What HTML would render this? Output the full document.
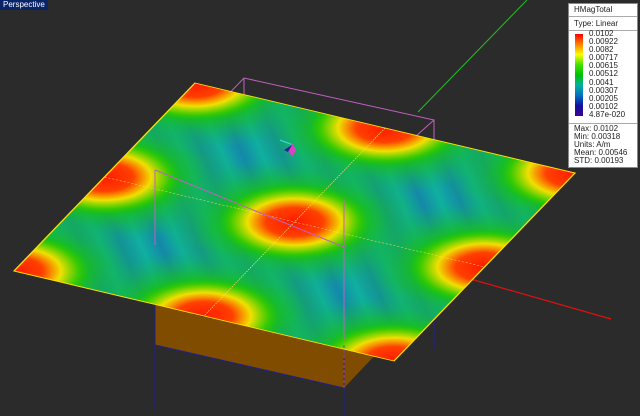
<!DOCTYPE html>
<html><head><style>
html,body{margin:0;width:640px;height:416px;overflow:hidden}
body{background:#2b2b2b;font-family:"Liberation Sans",sans-serif;position:relative}
.lab{position:absolute;left:0;top:0;background:#0a246a;color:#fff;font-size:8px;padding:0 3px;height:10px;line-height:10px}
.leg{position:absolute;left:568px;top:3px;width:70px;height:165px;background:#fff;border:1px solid #888;font-size:8px;color:#222;box-sizing:border-box}
.leg div{position:absolute;left:0}
</style></head><body>
<svg width="640" height="416" style="position:absolute;left:0;top:0;display:block">
<defs>
<linearGradient id="st" gradientUnits="userSpaceOnUse" x1="0" y1="0" x2="17" y2="-7" spreadMethod="reflect">
<stop offset="0" stop-color="#10b0a0"/><stop offset="1" stop-color="#1488a8"/></linearGradient>
<radialGradient id="gh"><stop offset="0" stop-color="#18c018"/><stop offset="0.5" stop-color="#18c018"/><stop offset="1" stop-color="#10b060" stop-opacity="0"/></radialGradient>
<radialGradient id="sp"><stop offset="0" stop-color="#ff1a00"/><stop offset="0.38" stop-color="#ff4000"/><stop offset="0.62" stop-color="#f0e000"/><stop offset="0.85" stop-color="#40cc00" stop-opacity="0.9"/><stop offset="1" stop-color="#18c018" stop-opacity="0"/></radialGradient>
<clipPath id="cp"><rect x="0" y="0" width="1" height="1"/></clipPath>
</defs>
<line x1="418" y1="112" x2="527" y2="0" stroke="#20c020" stroke-width="1"/>
<line x1="460" y1="276" x2="611" y2="319" stroke="#e01010" stroke-width="1.2"/>
<g stroke="#c060c0" stroke-width="1" fill="none">
<polyline points="155,170 244,78 434,120 344,200"/><line x1="244" y1="78" x2="244" y2="173"/><line x1="434" y1="120" x2="434" y2="195"/>
</g>
<polygon points="155,303 155,345 344,388 378,352 200,316" fill="#7f4c00"/>
<g stroke="#202090" stroke-width="1"><line x1="155" y1="300" x2="155" y2="410"/><line x1="344" y1="355" x2="344" y2="415"/><line x1="434" y1="320" x2="434" y2="350"/><line x1="155" y1="345" x2="344" y2="388"/></g>
<polygon points="195,83 575,173 394,361 14,271" fill="url(#st)"/>
<g transform="matrix(380,90,-181,188,195,83)">
<g clip-path="url(#cp)">
<g fill="url(#gh)">
<circle cx="0" cy="0" r="0.32"/><circle cx="0.5" cy="0" r="0.32"/><circle cx="1" cy="0" r="0.32"/>
<circle cx="0" cy="0.5" r="0.32"/><circle cx="0.5" cy="0.5" r="0.32"/><circle cx="1" cy="0.5" r="0.32"/>
<circle cx="0" cy="1" r="0.32"/><circle cx="0.5" cy="1" r="0.32"/><circle cx="1" cy="1" r="0.32"/>
</g>
<g fill="url(#sp)">
<circle cx="0" cy="0" r="0.18"/><circle cx="0.5" cy="0" r="0.18"/><circle cx="1" cy="0" r="0.18"/>
<circle cx="0" cy="0.5" r="0.18"/><circle cx="0.5" cy="0.5" r="0.18"/><circle cx="1" cy="0.5" r="0.18"/>
<circle cx="0" cy="1" r="0.18"/><circle cx="0.5" cy="1" r="0.18"/><circle cx="1" cy="1" r="0.18"/>
</g></g>
<rect x="0" y="0" width="1" height="1" fill="none" stroke="#ffe000" stroke-width="0.004"/>
<line x1="0.5" y1="0" x2="0.5" y2="1" stroke="#ffe060" stroke-width="0.002" stroke-dasharray="0.006 0.004"/>
<line x1="0" y1="0.5" x2="1" y2="0.5" stroke="#ffe060" stroke-width="0.002" stroke-dasharray="0.006 0.004"/>
</g>
<g stroke="#c060c0" stroke-width="1" fill="none"><line x1="155" y1="170" x2="155" y2="245"/><line x1="155" y1="170" x2="344" y2="247"/><line x1="344" y1="247" x2="344" y2="340"/><line x1="344" y1="200" x2="344" y2="247"/></g>
<line x1="344" y1="345" x2="344" y2="388" stroke="#8040c0" stroke-dasharray="3 2"/>
<line x1="280" y1="140" x2="293" y2="145" stroke="#40e0e0"/><polygon points="292,143 296,150 292,157 288,150" fill="#e040c0"/><polygon points="292,145 288,152 284,150" fill="#2020a0"/>
</svg>
<div class="lab">Perspective</div>
<div class="leg">
<div style="top:0;height:12px;border-bottom:1px solid #aaa;padding-left:5px;width:63px;line-height:12px">HMagTotal</div>
<div style="top:14px;height:12px;border-bottom:1px solid #aaa;padding-left:5px;width:63px;line-height:12px">Type: Linear</div>
<div style="top:30px;left:6px;width:8px;height:82px;background:linear-gradient(#ff0000,#ff8000,#ffff00,#40e000,#00c000,#00b0a0,#0070c0,#1010a0,#400090)"></div>
<div style="top:26px;left:20px;width:48px;line-height:8.1px">0.0102<br>0.00922<br>0.0082<br>0.00717<br>0.00615<br>0.00512<br>0.0041<br>0.00307<br>0.00205<br>0.00102<br>4.87e-020</div>
<div style="top:119px;height:1px;width:68px;background:#aaa"></div>
<div style="top:121px;left:5px;width:63px;line-height:8.1px">Max: 0.0102<br>Min: 0.00318<br>Units: A/m<br>Mean: 0.00546<br>STD: 0.00193</div>
</div>
</body></html>
